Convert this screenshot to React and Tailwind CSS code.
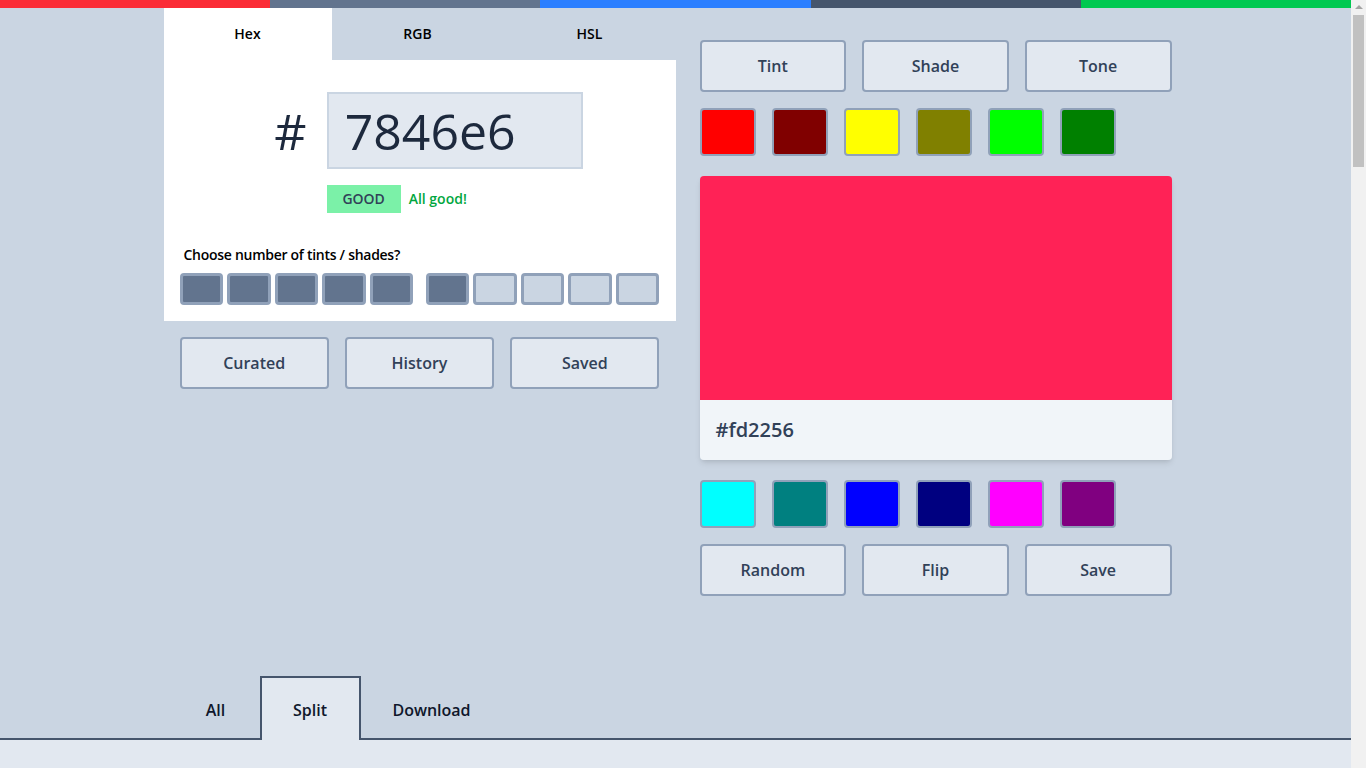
import React from 'react';

const topBar = ['bg-red-500', 'bg-slate-500', 'bg-blue-500', 'bg-slate-600', 'bg-green-500'];
const topSwatches = ['bg-[#ff0000]', 'bg-[#800000]', 'bg-[#ffff00]', 'bg-[#808000]', 'bg-[#00ff00]', 'bg-[#008000]'];
const bottomSwatches = ['bg-[#00ffff]', 'bg-[#008080]', 'bg-[#0000ff]', 'bg-[#000080]', 'bg-[#ff00ff]', 'bg-[#800080]'];

// button used across both columns
const Btn = ({ children }) => (
    <button className="h-[52px] rounded border-2 border-slate-400 bg-slate-200 text-base font-semibold text-slate-700">
        {children}
    </button>
);

const Swatches = ({ colors }) => (
    <div className="flex gap-4">
        {colors.map((c) => (
            <div key={c} className={`h-12 w-14 rounded border-2 border-slate-400 ${c}`} />
        ))}
    </div>
);

export default function App() {
    const filled = [true, true, true, true, true];
    const second = [true, false, false, false, false];

    return (
        <div className="min-h-screen bg-slate-300 pr-[15px] text-slate-900" style={{ fontFamily: '"Open Sans", "Noto Sans", sans-serif' }}>
            {/* scrollbar look-alike */}
            <div className="fixed top-0 right-0 bottom-0 z-10 flex w-[15px] flex-col items-center bg-[#f1f1f1]">
                <div className="mt-[5px] h-0 w-0 border-x-[4px] border-b-[4px] border-x-transparent border-b-[#a3a3a3]" />
                <div className="mt-[6px] h-[152px] w-[11px] bg-[#c1c1c1]" />
            </div>

            {/* colour strip */}
            <div className="flex h-2">
                {topBar.map((c) => (
                    <div key={c} className={`flex-1 ${c}`} />
                ))}
            </div>

            <div className="mx-auto flex w-[1024px]">
                {/* LEFT: input panel */}
                <div className="w-[512px]">
                    <div className="flex h-[52px] text-sm font-semibold text-black">
                        <div className="flex w-[168px] items-center justify-center bg-white">Hex</div>
                        <div className="flex w-[172px] items-center justify-center">RGB</div>
                        <div className="flex w-[172px] items-center justify-center">HSL</div>
                    </div>

                    <div className="bg-white px-4 pt-8 pb-4">
                        <div className="flex justify-center gap-5 pl-[18px]">
                            <div className="flex h-[77px] items-center text-[50px] leading-none text-slate-800">#</div>
                            <div>
                                <div className="flex h-[77px] w-[256px] items-center border-2 border-slate-300 bg-slate-200 px-4 text-[50px] leading-none text-slate-800">
                                    7846e6
                                </div>
                                <div className="mt-4 flex items-center gap-2">
                                    <div className="flex h-[28px] w-[74px] items-center justify-center bg-green-300 text-sm font-semibold text-slate-700">GOOD</div>
                                    <span className="text-sm font-semibold text-green-600">All good!</span>
                                </div>
                            </div>
                        </div>

                        <p className="mt-8 ml-1 text-sm font-semibold tracking-[-0.02em] text-black">Choose number of tints / shades?</p>
                        <div className="mt-2 flex gap-3">
                            {[filled, second].map((group, gi) => (
                                <div key={gi} className="flex flex-1 gap-1">
                                    {group.map((on, i) => (
                                        <div
                                            key={i}
                                            className={`h-[32px] flex-1 rounded border-[3px] border-slate-400 ${on ? 'bg-slate-500' : 'bg-slate-300'}`}
                                        />
                                    ))}
                                </div>
                            ))}
                        </div>
                    </div>

                    <div className="mt-4 grid grid-cols-3 gap-4 px-4">
                        <Btn>Curated</Btn>
                        <Btn>History</Btn>
                        <Btn>Saved</Btn>
                    </div>
                </div>

                {/* RIGHT: preview */}
                <div className="flex-1 pt-8 pr-4 pl-6">
                    <div className="grid grid-cols-3 gap-4">
                        <Btn>Tint</Btn>
                        <Btn>Shade</Btn>
                        <Btn>Tone</Btn>
                    </div>
                    <div className="mt-4">
                        <Swatches colors={topSwatches} />
                    </div>
                    <div className="mt-5 overflow-hidden rounded shadow-md">
                        <div className="h-56 bg-[#ff2256]" />
                        <div className="flex h-[60px] items-center bg-slate-100 px-4 text-xl font-semibold text-slate-700">#fd2256</div>
                    </div>
                    <div className="mt-5">
                        <Swatches colors={bottomSwatches} />
                    </div>
                    <div className="mt-4 grid grid-cols-3 gap-4">
                        <Btn>Random</Btn>
                        <Btn>Flip</Btn>
                        <Btn>Save</Btn>
                    </div>
                </div>
            </div>

            {/* bottom tabs */}
            <div className="mt-[80px] border-b-2 border-slate-600">
                <div className="mx-auto flex w-[1024px] text-base font-semibold text-slate-900">
                    <div className="flex h-[62px] w-[96px] items-center justify-center pt-[6px] pl-[8px]">All</div>
                    <div className="relative -mb-[2px] flex h-[64px] w-[101px] items-center justify-center border-2 border-b-0 border-slate-600 bg-slate-200 pt-[2px]">Split</div>
                    <div className="flex h-[62px] w-[142px] items-center justify-center pt-[6px]">Download</div>
                </div>
            </div>
            <div className="h-[2960px] bg-slate-200" />
        </div>
    );
}
